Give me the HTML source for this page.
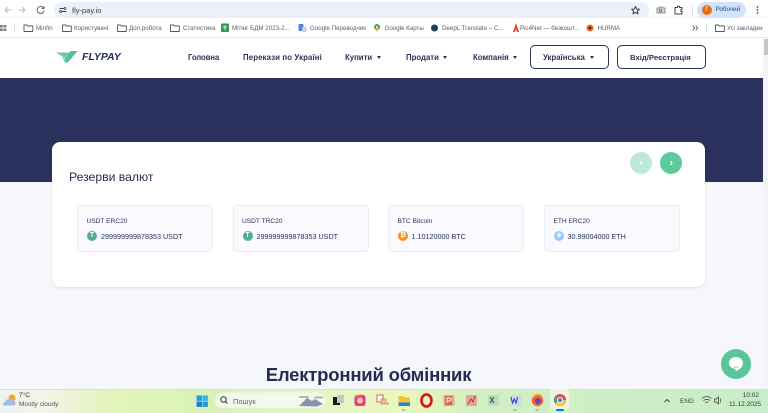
<!DOCTYPE html>
<html><head><meta charset="utf-8"><style>
*{box-sizing:border-box;margin:0;padding:0}
html,body{width:768px;height:413px;overflow:hidden;background:#f5f7fb;font-family:"Liberation Sans",sans-serif}
#w{position:absolute;left:0;top:0;width:768px;height:413px;filter:blur(.3px)}
.a{position:absolute;white-space:nowrap}
.bm{font-size:6.2px;color:#5a5f66;top:24px;line-height:10px}
.nav{font-size:7.8px;font-weight:bold;color:#2b3358;top:51.5px;line-height:12px}
.car{position:absolute;top:55.5px;width:0;height:0;border-left:2.5px solid transparent;border-right:2.5px solid transparent;border-top:3px solid #2b3358}
.btn{position:absolute;top:45px;height:24px;border:1.3px solid #2b3358;border-radius:5px;background:#fff}
.tile{position:absolute;top:205px;width:136px;height:47px;background:#f9f9fe;border:1px solid #ebedf5;border-radius:4px}
.tt{position:absolute;left:8.5px;top:10.5px;font-size:6.6px;line-height:10px;color:#2b3358;white-space:nowrap}
.tv{position:absolute;left:23px;top:25px;font-size:7.2px;line-height:11px;color:#2b3358;white-space:nowrap}
.ci{position:absolute;left:9px;top:25px;width:10px;height:10px;border-radius:50%;color:#fff;font-size:7px;line-height:10px;text-align:center;font-weight:bold}
svg{position:absolute;overflow:visible}
</style></head><body><div id="w">

<!-- browser chrome -->
<div class="a" style="left:0;top:0;width:768px;height:16px;background:#fff"></div>
<div class="a" style="left:54px;top:2px;width:595px;height:16px;border-radius:8px;background:#ebf0fa"></div>
<div class="a" style="left:0;top:18px;width:768px;height:20px;background:#fff;border-bottom:1px solid #e8eaed"></div>
<svg style="left:0;top:0" width="768" height="38" fill="none" stroke-linecap="round" stroke-linejoin="round">
<path d="M5 10h6M5 10l2.500-2.500M5 10l2.500 2.500" stroke="#b8bbc0"/>
<path d="M19 10h6M25 10l-2.500-2.500M25 10l-2.500 2.500" stroke="#b8bbc0"/>
<path d="M43.500 8a3.500 3.500 0 1 0 .5 3M44 6.500V8.500H42" stroke="#5f6368"/>
<path d="M60 8.500h4M62 11.500h4" stroke="#3c4043"/><circle cx="65" cy="8.500" r="1" stroke="#3c4043" stroke-width=".8"/><circle cx="60.500" cy="11.500" r="1" stroke="#3c4043" stroke-width=".8"/>
<path d="M635.500 6.500l1.200 2.500 2.700.3-2 1.800.6 2.700-2.500-1.400-2.500 1.400.6-2.700-2-1.800 2.700-.3z" stroke="#3c4043"/>
<path d="M657 8h2l.8-1h2.400l.8 1h2v5h-8z" stroke="#8a8d91" fill="#d8dadd"/><circle cx="660.500" cy="10.500" r="1.300" stroke="#777"/>
<path d="M675 7.500h2.500v-1.200h2v1.200h2.500v2h-1v2h1v2.500h-7z" stroke="#3c4043"/>
<path d="M692.500 6v9" stroke="#d5dff0"/>
<circle cx="757.500" cy="7" r=".9" fill="#444" stroke="none"/><circle cx="757.500" cy="10" r=".9" fill="#444" stroke="none"/><circle cx="757.500" cy="13" r=".9" fill="#444" stroke="none"/>
<!-- apps -->
<g fill="#7a7d82" stroke="none"><rect x="0" y="25" width="2.800" height="2.500"/><rect x="3.500" y="25" width="2.800" height="2.500"/><rect x="0" y="28.500" width="2.800" height="2.500"/><rect x="3.500" y="28.500" width="2.800" height="2.500"/></g>
<path d="M14.500 24v8" stroke="#d5dff0"/>
<!-- folders -->
<g stroke="#55585d" stroke-width=".9"><path d="M24 25h3l1 1h4.800v5.500H24z"/><path d="M62.500 25h3l1 1h4.800v5.500h-8.800z"/><path d="M117.500 25h3l1 1h4.800v5.500h-8.800z"/><path d="M170.500 25h3l1 1h4.800v5.500h-8.800z"/><path d="M715.500 25h3l1 1h4.800v5.500h-8.800z"/></g>
<rect x="221" y="23.500" width="8" height="8.500" rx="1" fill="#2d9b52" stroke="none"/><path d="M223 27h4M225 25.500v4.500" stroke="#fff" stroke-width=".8"/>
<rect x="298.500" y="24" width="5" height="7" rx="1" fill="#4a80e8" stroke="none"/><rect x="302" y="27" width="4.500" height="5" rx="1" fill="#c5cfe6" stroke="none"/>
<circle cx="377" cy="27" r="3" fill="#3fa35a" stroke="none"/><path d="M375 28l2 4 2-4z" fill="#e8a33a" stroke="none"/><circle cx="377" cy="27" r="1" fill="#fff" stroke="none"/>
<circle cx="434.500" cy="28" r="3.500" fill="#25405e" stroke="none"/>
<path d="M513 32l3-9 3 9h-2l-1-3-1 3z" fill="#e8481e" stroke="none"/>
<circle cx="590" cy="28" r="3.500" fill="#f0701a" stroke="none"/><circle cx="590" cy="28" r="1.500" fill="#5a2010" stroke="none"/>
<path d="M693 26l1.500 2-1.500 2M696 26l1.500 2-1.500 2" stroke="#444" stroke-width=".8"/>
<path d="M706.500 24v8" stroke="#d5dff0"/>
</svg>
<div class="a" style="left:72px;top:5px;font-size:7.500px;line-height:11px;color:#3c4043">fly-pay.io</div>
<div class="a" style="left:697px;top:2px;width:49px;height:16px;border-radius:8px;background:#d3e3fd"></div>
<div class="a" style="left:702px;top:5px;width:10px;height:10px;border-radius:50%;background:#ee6c0c;color:#fff;font-size:6px;line-height:10px;text-align:center">Г</div>
<div class="a" style="left:715.500px;top:5px;font-size:6.300px;line-height:10px;color:#2a4a7a">Робочий</div>
<div class="a bm" style="left:36px">Minfin</div>
<div class="a bm" style="left:74px">Користувачі</div>
<div class="a bm" style="left:129px">Доп.робота</div>
<div class="a bm" style="left:183px">Статистика</div>
<div class="a bm" style="left:232px">Мітінг БДМ 2023-2...</div>
<div class="a bm" style="left:310px">Google Переводчик</div>
<div class="a bm" style="left:384.500px">Google Карты</div>
<div class="a bm" style="left:442px">DeepL Translate – C...</div>
<div class="a bm" style="left:520px">Pic4Net — безкошт...</div>
<div class="a bm" style="left:597.500px">HURMA</div>
<div class="a bm" style="left:727px">Усі закладки</div>

<!-- site nav -->
<div class="a" style="left:0;top:38px;width:768px;height:40px;background:#fff"></div>
<svg style="left:56px;top:51px" width="22" height="12"><path d="M0 1.500H13L9.500 6 8 6.500z" fill="#6dcba3"/><path d="M21.500 0H14.500L9 7l-.5 4.500H12z" fill="#55c09a"/><path d="M6 6.500h3v5z" fill="#8fd9bb"/></svg>
<div class="a" style="left:82px;top:50.500px;font-size:10.400px;line-height:14px;font-weight:bold;font-style:italic;color:#232c52">FLYPAY</div>
<div class="a nav" style="left:188px;letter-spacing:-.15px">Головна</div>
<div class="a nav" style="left:243px;letter-spacing:.13px">Перекази по Україні</div>
<div class="a nav" style="left:345px">Купити</div><div class="car" style="left:376.500px"></div>
<div class="a nav" style="left:406px">Продати</div><div class="car" style="left:443px"></div>
<div class="a nav" style="left:473px">Компанія</div><div class="car" style="left:513px"></div>
<div class="btn" style="left:530px;width:79px"></div>
<div class="a nav" style="left:543px">Українська</div><div class="car" style="left:590px"></div>
<div class="btn" style="left:617px;width:89px"></div>
<div class="a nav" style="left:630px;font-size:7.7px">Вхід/Реєстрація</div>
<div class="a" style="left:763px;top:38px;width:5px;height:351px;background:#f3f4f6"></div>
<div class="a" style="left:764px;top:39px;width:4px;height:16px;background:#c4c6ca"></div>

<!-- hero -->
<div class="a" style="left:0;top:78px;width:763px;height:104px;background:#2a315c"></div>

<!-- card -->
<div class="a" style="left:52px;top:142px;width:653px;height:145px;background:#fff;border-radius:8px;box-shadow:0 1px 2px rgba(40,50,90,.12)"></div>
<div class="a" style="left:69px;top:169px;font-size:12.200px;line-height:16px;color:#232c52">Резерви валют</div>
<div class="a" style="left:630px;top:152px;width:22px;height:22px;border-radius:50%;background:#bcead6"></div>
<div class="a" style="left:659.500px;top:152px;width:22px;height:22px;border-radius:50%;background:#5bcb9b"></div>
<svg style="left:630px;top:152px" width="52" height="22" fill="none" stroke="#fff" stroke-width="1.100"><path d="M12 9l-1.500 2 1.500 2"/><path d="M40.500 9l1.500 2-1.500 2"/></svg>

<div class="tile" style="left:77px"><div class="tt">USDT ERC20</div><div class="ci" style="background:#50af95">T</div><div class="tv">299999999878353 USDT</div></div>
<div class="tile" style="left:232.500px"><div class="tt">USDT TRC20</div><div class="ci" style="background:#50af95">T</div><div class="tv">299999999878353 USDT</div></div>
<div class="tile" style="left:388px"><div class="tt">BTC Bitcoin</div><div class="ci" style="background:#f7931a">₿</div><div class="tv" style="left:22.500px">1.10120000 BTC</div></div>
<div class="tile" style="left:544px"><div class="tt">ETH ERC20</div><div class="ci" style="background:#8fd0f8;color:#e8e8ff">◆</div><div class="tv" style="left:22.500px">30.99004000 ETH</div></div>

<div class="a" style="left:0;top:362px;width:737px;text-align:center;font-size:18.500px;line-height:26px;font-weight:bold;color:#232c52;letter-spacing:-.2px">Електронний обмінник</div>

<!-- chat -->
<div class="a" style="left:721px;top:349px;width:30px;height:30px;border-radius:50%;background:#5bc49a"></div>
<svg style="left:721px;top:349px" width="30" height="30"><path d="M15 8c-4 0-7 2.600-7 6 0 3.200 2.800 5.800 6.500 5.900v2.300c3.700-1.300 7.500-4 7.500-8.200 0-3.400-3-6-7-6z" fill="#fff"/><path d="M13 18h4" stroke="#5bc49a" stroke-width=".8"/></svg>

<!-- taskbar -->
<div class="a" style="left:0;top:389px;width:768px;height:24px;background:linear-gradient(90deg,#eef3f0 0,#f2f4e4 50px,#e3f4bb 110px,#d8f2b8 210px,#e2f5c6 300px,#ecf6bd 400px,#d2f0c2 480px,#c8edc9 768px);border-top:1px solid #d4e0d0"></div>
<svg style="left:0;top:389px" width="768" height="24">
<circle cx="12" cy="9" r="3.500" fill="#f2a33a"/>
<path d="M3.500 16.500c-1 0-1-3.500 1.500-3.500 .5-3 5-4 6.500-1.500 3-1 4.500 1.500 4 2 0 1 0 3-1 3z" fill="#9fbfe6"/>
<rect x="196.500" y="6.500" width="5.400" height="5.400" fill="#1e9de0"/><rect x="202.500" y="6.500" width="5.400" height="5.400" fill="#37b2ee"/><rect x="196.500" y="12.500" width="5.400" height="5.400" fill="#1582d0"/><rect x="202.500" y="12.500" width="5.400" height="5.400" fill="#1e9de0"/>
<rect x="215" y="3.500" width="110" height="15.500" rx="7.700" fill="#f3f8ec"/>
<circle cx="223.500" cy="10.500" r="2.700" fill="none" stroke="#333" stroke-width="1"/><path d="M225.500 12.500l2 2" stroke="#333" stroke-width="1"/>
<path d="M299 17l8-8 5 3 3-2 8 5-6 2.500z" fill="#8e8fb0"/><path d="M300 8h8M315 8.500h7" stroke="#b9b2b0" stroke-width="2" stroke-linecap="round"/>
<rect x="333" y="8" width="7" height="8" fill="#1a1a1a"/><rect x="337" y="6" width="7" height="8" fill="#c4c6c4"/>
<rect x="354.500" y="6" width="11" height="11" rx="2.500" fill="#e23a8e"/><circle cx="360" cy="11.500" r="3" fill="#f9c7a0"/><path d="M355 8l4-2h4" stroke="#f29a3a" fill="none"/>
<rect x="377" y="6" width="6" height="7" fill="#fff" stroke="#d76a4a"/><rect x="381" y="10" width="5" height="5" fill="#f4b69a" stroke="#d76a4a" stroke-width=".6"/><path d="M386 15l2-2 1 3" fill="#5fb6d8"/>
<path d="M398.500 7h5l1 1.500h5.500v8.500h-11.500z" fill="#f4c430"/><rect x="398.500" y="13.500" width="11.500" height="3.500" fill="#1e88d8"/>
<ellipse cx="426.500" cy="11.500" rx="5" ry="6" fill="none" stroke="#d4141c" stroke-width="2.600"/>
<rect x="443.500" y="6" width="11" height="11" rx="1" fill="#f0a488"/><rect x="445" y="7" width="7" height="9" fill="#d9572f" opacity=".8"/><path d="M447 14V9h2.500a1.500 1.500 0 0 1 0 3H447" fill="none" stroke="#fff" stroke-width=".9"/>
<rect x="466" y="6" width="11" height="11" rx="1" fill="#e2a7a2"/><path d="M468 15l3-5 2 3 2-6" fill="none" stroke="#b53630" stroke-width="1"/>
<rect x="488" y="6" width="11" height="11" rx="1" fill="#c0dcc0"/><path d="M490 8l4 6M494 8l-4 6" stroke="#2a7a4a" stroke-width="1.300"/>
<rect x="510.500" y="6" width="11" height="11" rx="1" fill="#cbd7ef"/><path d="M511 8l1.500 6 1.800-4 1.800 4 1.500-6" fill="none" stroke="#1f4e9c" stroke-width="1.100"/>
<circle cx="537.500" cy="11.500" r="5.700" fill="#f2642a"/><circle cx="538" cy="12" r="3" fill="#6b3fc2"/><path d="M532.500 9c1-3 6-5 9-2" fill="none" stroke="#f9b32c" stroke-width="1.500"/>
<rect x="550" y="0" width="19" height="21" rx="2" fill="#e9f6e3"/>
<circle cx="560" cy="11" r="6" fill="#e8453c"/><path d="M560 11l-5.200 3A6 6 0 0 1 555 7.500z" fill="#3aa757"/><path d="M560 11l5.800 0A6 6 0 0 1 555 14.500z" fill="#f9ca2f"/><circle cx="560" cy="11" r="2.700" fill="#4285f4" stroke="#fff" stroke-width=".9"/>
<rect x="556" y="20" width="8" height="2" rx="1" fill="#1275c4"/>
<g fill="#888"><rect x="402" y="20.500" width="3" height="1"/><rect x="513.500" y="20.500" width="3" height="1"/><rect x="535.500" y="20.500" width="3" height="1"/></g>
<path d="M664.500 13l2.500-2.500 2.500 2.500" fill="none" stroke="#444"/>
<path d="M702 9.500c3-2.500 6.500-2.500 9.500 0M703.500 11.500c2-1.500 4.500-1.500 6.500 0M705.500 13.500c1-.7 1.500-.7 2.500 0" fill="none" stroke="#444" stroke-width=".8"/>
<path d="M714.500 10h2l2-2v7l-2-2h-2z" fill="none" stroke="#444" stroke-width=".8"/><path d="M720 9.500c1 1 1 3 0 4" fill="none" stroke="#444" stroke-width=".7"/>
</svg>
<div class="a" style="left:19px;top:391px;font-size:6.500px;line-height:9px;color:#333">7°C</div>
<div class="a" style="left:19px;top:400px;font-size:6.500px;line-height:10px;color:#555">Mostly cloudy</div>
<div class="a" style="left:233px;top:396px;font-size:7.500px;line-height:11px;color:#666">Пошук</div>
<div class="a" style="left:680px;top:397px;font-size:6.500px;line-height:10px;color:#444">ENG</div>
<div class="a" style="left:729px;top:391px;width:30px;text-align:right;font-size:6.500px;line-height:9px;color:#333">10:02</div>
<div class="a" style="left:729px;top:400px;width:30px;text-align:right;font-size:6.500px;line-height:10px;color:#333">11.12.2025</div>
</div></body></html>
